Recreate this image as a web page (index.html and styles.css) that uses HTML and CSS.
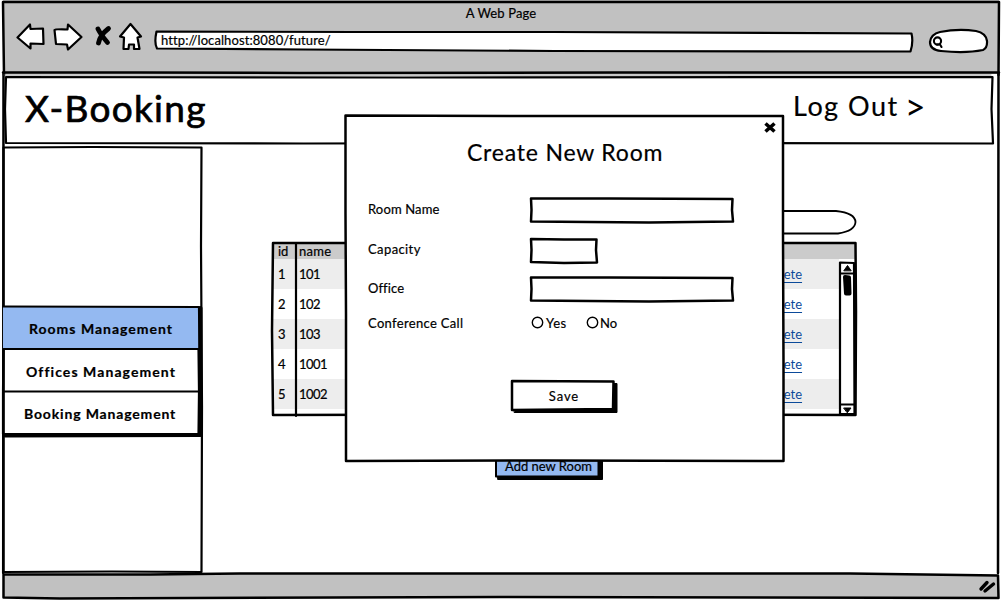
FILE: index.html
```html
<!DOCTYPE html>
<html lang="en">
<head>
<meta charset="utf-8">
<title>A Web Page</title>
<link rel="stylesheet" href="styles.css">
</head>
<body>
<div class="window">
  <header class="chrome">
    <svg class="ink" width="1001" height="75" viewBox="0 0 1001 75">
      <path d="M4 75L3.500 40L3 2L500 2L999 2L998.500 75" />
      <path d="M3 72.500L140 72.500L300 73L620 72.500L999 72.500" />
    </svg>
    <div class="chrome-title">A Web Page</div>
    <div class="toolbar">
      <svg class="nav-icons" width="128" height="32" viewBox="0 0 128 32">
        <path class="shape" d="M1.500 15.500L14 2.500L14.500 7L27 6.500L27.500 22L14.500 21.500L14.500 26.500Z" />
        <path class="shape" d="M38.500 8Q39 7 51.500 7.500L52 2.500L65.500 15L52 27.500L51 22.500L40 22Z" />
        <path class="cross" d="M82 7Q85 13 91.500 20.500M92.500 6.500Q84 13 82.500 21" />
        <path class="shape" d="M114.500 2L125 14.500L121.500 15.500L123.500 27L118 27L118 22.500L113 22.500L112.500 27L107.500 27L108 15.500L104 14.500Z" />
      </svg>
      <div class="address">
        <svg class="ink" width="760" height="22" viewBox="0 0 760 22">
          <path class="paper thin" d="M2.500 .5L200 1L400 1L757.500 2.500Q759.500 11 756.500 20.500L400 20L150 18.500L3 17.500Q0 12 2.500 .5Z" />
        </svg>
        <span class="url">http://localhost:8080/future/</span>
      </div>
      <svg class="quick-search" width="61" height="26" viewBox="0 0 61 26">
        <path class="paper thin" d="M12 4Q30 .5 48 3Q58 5 59 13Q59.500 20 55 22Q38 25.500 13 23Q2 22 2 14Q3 6 12 4Z" />
        <circle class="lens" cx="9.500" cy="13" r="3.600" />
        <path class="lens" d="M8.500 16.500L12 16.500L13.500 19" />
      </svg>
    </div>
  </header>

  <div class="page">
    <svg class="ink" width="1001" height="500" viewBox="0 0 1001 500">
      <path d="M3.500 0L3.200 499" /><path d="M998.500 0L998 499" />
    </svg>
    <div class="banner">
      <svg class="ink" width="990" height="72" viewBox="0 0 990 72">
        <path class="thin" d="M2 3L400 3.500L988.500 3L987.500 35L989 69.500L600 69L300 69.500L2 69L1 35Z" />
        <path class="hair" d="M0 1L987 1" />
      </svg>
      <h1 class="brand">X-Booking</h1>
      <a class="logout"><span>Log Out</span><span class="arrow">&gt;</span></a>
    </div>

    <div class="columns">
      <nav class="sidebar">
        <svg class="ink" width="202" height="430" viewBox="0 0 202 430">
          <path class="thin" d="M1.500 1.500L90 1L199.500 1.500L199 100L200 260L199.500 426L110 425.500L1.500 426Z" />
        </svg>
        <div class="menu">
          <svg class="ink" width="202" height="132" viewBox="0 0 202 132">
            <path class="blue" d="M1 2L197 2L197 44L1 44Z" />
            <path class="heavy" d="M198.500 3L198.500 130L3 130.500" />
            <path class="thin" d="M1 1.500L197 2L197.500 44L1.500 44L1 86.500L197 86.500L196.500 44M1 87L1 129L196.500 129L197 87" />
          </svg>
          <a class="menu-item rooms">Rooms Management</a>
          <a class="menu-item offices">Offices Management</a>
          <a class="menu-item booking">Booking Management</a>
        </div>
      </nav>

      <main class="main">
        <svg class="search" width="156" height="26" viewBox="0 0 156 26">
          <path class="paper slim" d="M12 2L135 2Q154 4 154.500 13Q154 22 137 24.500L12 24.500Q2 22 1.500 13Q2 4 12 2Z" />
        </svg>
        <div class="table">
          <div class="row head"><span class="id">id</span><span class="name">name</span></div>
          <div class="row"><span class="id">1</span><span class="name num">101</span><a class="delete">Delete</a></div>
          <div class="row"><span class="id">2</span><span class="name num">102</span><a class="delete">Delete</a></div>
          <div class="row"><span class="id">3</span><span class="name num">103</span><a class="delete">Delete</a></div>
          <div class="row"><span class="id">4</span><span class="name num">1001</span><a class="delete">Delete</a></div>
          <div class="row"><span class="id">5</span><span class="name num">1002</span><a class="delete">Delete</a></div>
          <svg class="ink" width="586" height="176" viewBox="0 0 586 176">
            <path d="M2 2L300 2L584.500 2L585 70L584.500 174L300 173.500L2 174L1 90Z" />
            <path class="thin" d="M25 2L25 175" />
            <path class="paper thin" d="M569 21.500L583 22L583.500 173L569 173Z" />
            <path class="thin" d="M569 32.500L583 32.500M569 163.500L583 163.500" />
            <path class="solid" d="M573 29.500L576.500 24.500L580 29.500ZM573 167L580 167L576.500 171.500Z" />
            <path class="thumb" d="M574 36L578 36.500L578.500 52.500L575 52.500Z" />
          </svg>
        </div>
        <button class="button add">
          <svg class="ink" width="110" height="28" viewBox="0 0 110 28">
            <path class="solid" d="M4 4L108.500 4L108.500 27.500L4 27.500Z" />
            <path class="blue outlined" d="M2 2L104.500 2L104.500 24.500L2 24.500Z" />
          </svg>
          <span class="caption">Add new Room</span>
        </button>
      </main>
    </div>
  </div>

  <footer class="status">
    <svg class="ink" width="1001" height="28" viewBox="0 0 1001 28">
      <path class="clay" d="M3.500 1.500L150 1.500L240 .5L850 .5L998 2.500L998.500 25L500 24L60 25.500L3.500 24.500Z" />
      <path class="grip" d="M981 16L987 9.500M985 18L993.500 11" />
    </svg>
  </footer>

  <section class="modal">
    <svg class="ink" width="442" height="350" viewBox="0 0 442 350">
      <path class="paper" d="M1.500 1.500L200 2L439 2L439 120L439.500 250L439.500 347L200 346.500L2 347L2 200L1.500 100Z" />
      <path class="close" d="M421.500 9.500L430.500 17.500M430.500 9.500L421.500 17.500" />
    </svg>
    <h2 class="modal-title">Create New Room</h2>
    <form class="form">
      <span class="label l-name">Room Name</span>
      <svg class="field" width="206" height="28" viewBox="0 0 206 28">
        <path class="paper" d="M2 2.500L80 2.500L203.500 3L203 14L204 25.500L120 26.500L60 26L2 25.500L2.500 14Z" />
      </svg>
      <span class="label l-capacity">Capacity</span>
      <svg class="field" width="70" height="28" viewBox="0 0 70 28">
        <path class="paper" d="M2 3L35 3.500L67.500 3.500L67 14L68 26.500L35 27L2 26L2.500 14Z" />
      </svg>
      <span class="label l-office">Office</span>
      <svg class="field" width="206" height="28" viewBox="0 0 206 28">
        <path class="paper" d="M2 1.500L80 1.500L203.500 2L203 13L204 24.500L120 25.500L60 25L2 24.500L2.500 13Z" />
      </svg>
      <span class="label l-call">Conference Call</span>
      <span class="choices">
        <svg class="radio" width="13" height="13" viewBox="0 0 13 13"><circle cx="6.500" cy="6.500" r="5.200" /></svg>
        <span class="yes">Yes</span>
        <svg class="radio" width="13" height="13" viewBox="0 0 13 13"><circle cx="6.500" cy="6.500" r="5.200" /></svg>
        <span class="no">No</span>
      </span>
    </form>
    <button class="button save">
      <svg class="ink" width="108" height="34" viewBox="0 0 108 34">
        <path class="solid" d="M4.500 4.500L107 4.500L107 33.500L4.500 33.500Z" />
        <path class="paper" d="M2 2L103.500 2.500L103 30L2 31Z" />
      </svg>
      <span class="caption">Save</span>
    </button>
  </section>
</div>
</body>
</html>
```

FILE: styles.css
```css
* { box-sizing: border-box; }

body {
  margin: 0;
  background: #fff;
  color: #000;
  font: 13px/16px Lato, "Open Sans", sans-serif;
  -webkit-text-stroke: 0.2px #000;
}

h1, h2 { margin: 0; font-weight: 400; }
a { color: inherit; white-space: nowrap; }
span { white-space: nowrap; }
svg { display: block; flex: none; }

/* Hand-drawn strokes */
path, circle { fill: none; stroke: #000; stroke-width: 2.5; stroke-linejoin: round; stroke-linecap: round; }
.ink { position: absolute; left: 0; top: 0; overflow: visible; pointer-events: none; }
.paper, .shape { fill: #fff; }
.thin { stroke-width: 2.2; }
.slim { stroke-width: 1.8; }
.hair { stroke-width: 0.8; stroke: #777; }
.heavy { stroke-width: 4; }
.solid { fill: #000; stroke-width: 1; }
.blue { fill: #94b9f1; stroke: none; }
.blue.outlined { stroke: #000; stroke-width: 2; }
.clay { fill: #c1c1c1; }
.shape { stroke-width: 2.2; }
.cross { stroke-width: 4.8; }
.lens { stroke-width: 2.1; }
.grip { stroke-width: 3.4; }
.close { stroke-width: 3.6; stroke-linecap: butt; }
.thumb { fill: #000; stroke-width: 4; }

.window {
  position: relative;
  display: flex;
  flex-direction: column;
  width: 1001px;
  height: 600px;
  overflow: hidden;
}

/* Browser chrome */
.chrome {
  position: relative;
  height: 74px;
  margin: 0 2px 0 3px;
  padding-top: 5px;
  background: #c1c1c1;
}
.chrome > .ink { left: -3px; }
.chrome-title { text-align: center; letter-spacing: 0.12px; }
.toolbar { display: flex; align-items: flex-start; padding-left: 13px; }
.nav-icons { margin-top: 1px; }
.address { position: relative; width: 760px; height: 22px; margin: 10px 0 0 10px; padding: 1px 7px; }
.url { position: relative; letter-spacing: 0.09px; }
.quick-search { margin: 7px 0 0 14px; }

/* Page */
.page { position: relative; display: flex; flex-direction: column; height: 499px; }
.banner {
  position: relative;
  display: flex;
  justify-content: space-between;
  height: 72px;
  margin-left: 4px;
  padding: 12px 72px 0 21px;
}
.brand { font-size: 37px; line-height: 43px; letter-spacing: 1.3px; -webkit-text-stroke-width: 0.7px; }
.logout { display: flex; gap: 6px; width: 136px; font-size: 27px; line-height: 40px; letter-spacing: 1.5px; }
.arrow { font-size: 36px; letter-spacing: 0; -webkit-text-stroke-width: 0; }
.columns { display: flex; flex: 1; }

.sidebar { position: relative; width: 202px; padding-top: 159px; margin-left: 2px; }
.menu { position: relative; display: grid; grid-template-rows: 43px 42px 43px; padding-top: 2px; }
.menu-item { position: relative; font-size: 14px; font-weight: 700; line-height: 43px; -webkit-text-stroke-width: 0.2px; }
.rooms { padding-left: 27px; letter-spacing: 1px; }
.offices { padding-left: 24px; letter-spacing: 1.08px; }
.booking { padding-left: 22px; letter-spacing: 0.84px; }

.main { display: flex; flex-direction: column; padding: 63px 0 0 67px; }
.search { margin-left: 430px; }
.table { position: relative; width: 586px; height: 176px; margin-top: 6px; padding: 2px; }
.row { display: flex; align-items: center; height: 30px; width: 566px; padding-left: 5px; }
.row:nth-child(even) { background: #ededed; }
.head { width: 582px; height: 16px; background: #cbcbcb; }
.id { width: 21px; }
.name { width: 150px; letter-spacing: 0.3px; }
.num { letter-spacing: -0.5px; }
.delete { margin-left: 315px; color: #0b4a9a; text-decoration: underline; text-underline-offset: 3px; -webkit-text-stroke-width: 0; }

.button { position: relative; border: 0; padding: 0; background: none; font: inherit; color: inherit; }
.caption { position: relative; display: block; }
.add { width: 110px; height: 28px; margin: 35px 0 0 223px; padding: 0 1px 0 0; }

.status { position: relative; height: 27px; }

/* Dialog */
.modal {
  position: absolute;
  left: 344px;
  top: 114px;
  width: 442px;
  height: 350px;
  padding: 23px 24px 0;
}
.modal-title { position: relative; padding-left: 99px; font-size: 23px; line-height: 30px; letter-spacing: 0.8px; }
.form {
  position: relative;
  display: grid;
  grid-template-columns: 161px 1fr;
  grid-template-rows: 28px 28px 28px 16px;
  row-gap: 12px;
  align-items: center;
  margin-top: 29px;
}
.label { padding-bottom: 2px; }
.field { overflow: visible; }
.l-name { letter-spacing: 0.15px; }
.l-capacity { letter-spacing: 0.4px; }
.l-office { padding-bottom: 4px; letter-spacing: 0.1px; }
.l-call { letter-spacing: 0.33px; }
.choices { display: flex; align-items: center; padding: 0 0 3px 2px; }
.radio circle { stroke-width: 1.4; fill: #fff; }
.yes { width: 42px; padding-left: 2px; letter-spacing: 0.5px; }
.no { padding-left: 1px; }
.save { display: block; width: 108px; height: 34px; margin: 47px 0 0 142px; padding: 0 0 1px 0; }
.save .caption { letter-spacing: 0.9px; }
```
